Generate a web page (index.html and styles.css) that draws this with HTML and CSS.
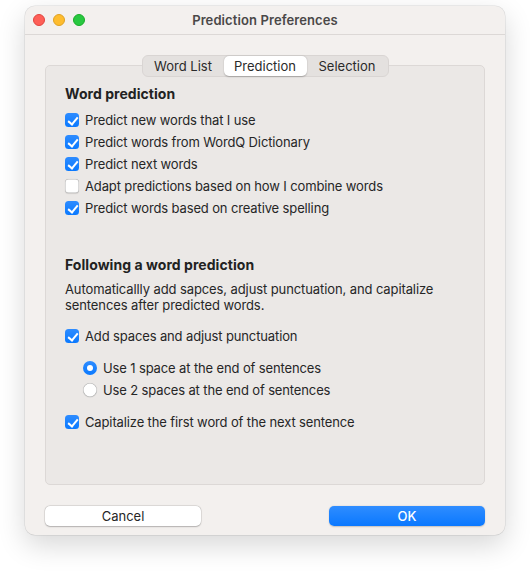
FILE: index.html
```html
<!DOCTYPE html>
<html>
<head>
<meta charset="utf-8">
<link rel="stylesheet" href="styles.css">
</head>
<body>
<div class="window">
  <div class="titlebar">
    <div class="lights">
      <span class="light red"></span>
      <span class="light yellow"></span>
      <span class="light green"></span>
    </div>
    <div class="title">Prediction Preferences</div>
  </div>
  <div class="content">
    <div class="tabs">
      <div class="tab">Word List</div>
      <div class="tab active">Prediction</div>
      <div class="tab">Selection</div>
    </div>
    <div class="box">
      <div class="heading">Word prediction</div>
      <div class="list">
        <div class="row"><span class="cb on"></span>Predict new words that I use</div>
        <div class="row"><span class="cb on"></span>Predict words from WordQ Dictionary</div>
        <div class="row"><span class="cb on"></span>Predict next words</div>
        <div class="row"><span class="cb"></span>Adapt predictions based on how I combine words</div>
        <div class="row"><span class="cb on"></span>Predict words based on creative spelling</div>
      </div>
      <div class="heading second">Following a word prediction</div>
      <p class="desc">Automaticallly add sapces, adjust punctuation, and capitalize sentences after predicted words.</p>
      <div class="row gap-top"><span class="cb on"></span>Add spaces and adjust punctuation</div>
      <div class="radios">
        <div class="row"><span class="rb on"></span>Use 1 space at the end of sentences</div>
        <div class="row"><span class="rb"></span>Use 2 spaces at the end of sentences</div>
      </div>
      <div class="row gap-top2"><span class="cb on"></span>Capitalize the first word of the next sentence</div>
    </div>
    <div class="buttons">
      <div class="btn cancel">Cancel</div>
      <div class="btn ok">OK</div>
    </div>
  </div>
</div>
</body>
</html>
```
FILE: styles.css
```css
* { box-sizing: border-box; }
html, body { margin: 0; padding: 0; background: #ffffff; }
body {
  width: 530px;
  height: 578px;
  font-family: Inter, "Noto Sans", "Liberation Sans", sans-serif;
  font-size: 13px;
  color: #262626;
  padding: 6px 0 0 25px;
}
.window {
  width: 480px;
  height: 529px;
  background: #f3f0ee;
  border-radius: 10px;
  box-shadow: 0 0 0 0.5px rgba(0,0,0,0.12), 0 10px 28px rgba(0,0,0,0.16);
  overflow: hidden;
}
.titlebar {
  height: 29px;
  border-bottom: 1px solid #dcd8d6;
  display: flex;
  align-items: center;
  position: relative;
}
.lights {
  display: flex;
  gap: 8px;
  padding-left: 8px;
  position: absolute;
  left: 0;
  top: 8px;
}
.light {
  width: 12px;
  height: 12px;
  border-radius: 50%;
  display: block;
}
.red { background: #fe5f57; border: 0.5px solid #e0443e; }
.yellow { background: #febc2e; border: 0.5px solid #dea123; }
.green { background: #28c840; border: 0.5px solid #1aab29; }
.title {
  flex: 1;
  text-align: center;
  font-weight: 600;
  font-size: 13px;
  color: #4a4848;
  letter-spacing: 0.1px;
}
.content {
  padding: 20px 20px 0 20px;
}
.tabs {
  display: flex;
  width: 247px;
  height: 22px;
  margin: 0 auto -12px auto;
  background: #e4e1df;
  border: 1px solid #d9d5d3;
  border-radius: 6px;
  position: relative;
  z-index: 1;
  padding: 0;
}
.tab {
  flex: 1;
  display: flex;
  align-items: center;
  justify-content: center;
  color: #2a2a2a;
  font-size: 13px;
}
.tab.active {
  background: #ffffff;
  border-radius: 5px;
  box-shadow: 0 0.5px 1.5px rgba(0,0,0,0.25);
  margin: 0;
  flex: 0 0 83px;
}
.box {
  height: 420px;
  background: #ebe8e6;
  border: 1px solid #dcd8d6;
  border-radius: 5px;
  padding: 19px 19px 0 19px;
}
.heading {
  font-weight: 700;
  font-size: 14px;
  line-height: 18px;
  height: 18px;
  color: #222;
  letter-spacing: 0.05px;
}
.heading.second { margin-top: 37px; }
.list { margin-top: 6px; }
.row {
  height: 22px;
  display: flex;
  align-items: center;
  line-height: 22px;
  letter-spacing: -0.13px;
}
.cb {
  width: 14px;
  height: 14px;
  border-radius: 3.5px;
  margin-right: 6px;
  flex: none;
  background: #ffffff;
  box-shadow: inset 0 0 0 0.5px rgba(0,0,0,0.3), 0 0.5px 1px rgba(0,0,0,0.12);
  position: relative;
}
.cb.on {
  background: linear-gradient(#2e8cff, #0a79ff);
  box-shadow: none;
}
.cb.on::after {
  content: "";
  position: absolute;
  left: 4.5px;
  top: 1.5px;
  width: 4px;
  height: 8px;
  border: solid #fff;
  border-width: 0 2px 2px 0;
  transform: rotate(40deg);
}
.desc {
  margin: 7px 0 0 0;
  line-height: 16px;
  width: 380px;
  letter-spacing: -0.1px;
}
.gap-top { margin-top: 12px; }
.gap-top2 { margin-top: 10px; }
.radios { margin: 10px 0 0 18px; }
.rb {
  width: 14px;
  height: 14px;
  border-radius: 50%;
  margin-right: 6px;
  flex: none;
  background: #fff;
  box-shadow: inset 0 0 0 0.5px rgba(0,0,0,0.3), 0 0.5px 1px rgba(0,0,0,0.12);
  position: relative;
}
.rb.on {
  background: linear-gradient(#2e8cff, #0a79ff);
  box-shadow: none;
}
.rb.on::after {
  content: "";
  position: absolute;
  left: 4px;
  top: 4px;
  width: 6px;
  height: 6px;
  border-radius: 50%;
  background: #fff;
}
.buttons {
  display: flex;
  justify-content: space-between;
  margin-top: 21px;
}
.btn {
  width: 156px;
  height: 20px;
  border-radius: 5px;
  display: flex;
  align-items: center;
  justify-content: center;
  font-size: 13px;
  line-height: 16px;
  padding-bottom: 1px;
}
.cancel {
  background: #fff;
  color: #262626;
  box-shadow: 0 0 0 0.5px rgba(0,0,0,0.12), 0 0.5px 1.5px rgba(0,0,0,0.22);
}
.ok {
  background: linear-gradient(#2f8dff, #0a78ff);
  color: #fff;
  font-weight: 500;
  box-shadow: 0 0.5px 1.5px rgba(0,0,0,0.2);
}
```
